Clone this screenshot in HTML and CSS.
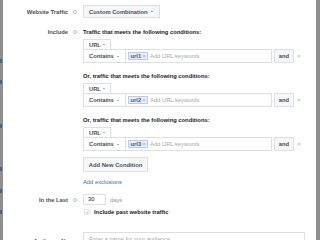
FILE: index.html
```html
<!DOCTYPE html>
<html>
<head>
<meta charset="utf-8">
<link rel="stylesheet" href="styles.css">
</head>
<body>
<div class="screen">
  <div class="edge edge-left">
    <span class="peek p1"></span>
    <span class="peek p2"></span>
    <span class="peek p3"></span>
    <span class="peek p4"></span>
    <span class="peek p5"></span>
    <span class="peek p6"></span>
  </div>
  <div class="dialog">
    <div class="row r-traffic">
      <div class="label">Website Traffic <span class="info"></span></div>
      <div class="field">
        <div class="btn select">Custom Combination <span class="caret"></span></div>
      </div>
    </div>

    <div class="row r-include">
      <div class="label">Include <span class="info"></span></div>
      <div class="field">
        <div class="cond">
          <div class="cond-title">Traffic that meets the following conditions:</div>
          <div class="btn url-sel">URL <span class="caret"></span></div>
          <div class="cond-row">
            <div class="btn contains">Contains <span class="caret"></span></div>
            <div class="kw"><span class="token">url1 <span class="tx">×</span></span><span class="ph">Add URL keywords</span></div>
            <div class="btn and">and</div>
            <div class="remove">×</div>
          </div>
        </div>
        <div class="cond">
          <div class="cond-title">Or, traffic that meets the following conditions:</div>
          <div class="btn url-sel">URL <span class="caret"></span></div>
          <div class="cond-row">
            <div class="btn contains">Contains <span class="caret"></span></div>
            <div class="kw"><span class="token">url2 <span class="tx">×</span></span><span class="ph">Add URL keywords</span></div>
            <div class="btn and">and</div>
            <div class="remove">×</div>
          </div>
        </div>
        <div class="cond">
          <div class="cond-title">Or, traffic that meets the following conditions:</div>
          <div class="btn url-sel">URL <span class="caret"></span></div>
          <div class="cond-row">
            <div class="btn contains">Contains <span class="caret"></span></div>
            <div class="kw"><span class="token">url3 <span class="tx">×</span></span><span class="ph">Add URL keywords</span></div>
            <div class="btn and">and</div>
            <div class="remove">×</div>
          </div>
        </div>
        <div class="btn add-cond">Add New Condition</div>
        <div class="link">Add exclusions</div>
      </div>
    </div>

    <div class="row r-last">
      <div class="label">In the Last <span class="info"></span></div>
      <div class="field inline">
        <div class="days-input">30</div>
        <span class="muted">days</span>
      </div>
    </div>

    <div class="row r-past">
      <div class="label"></div>
      <div class="field inline">
        <span class="check"><svg viewBox="0 0 8 8" width="5" height="5"><path d="M1.5 4.2 L3.2 5.8 L6.5 2" fill="none" stroke="#8d949e" stroke-width="1.1"/></svg></span>
        <span class="strong">Include past website traffic</span>
      </div>
    </div>

    <div class="sep"></div>

    <div class="row r-name">
      <div class="label">Audience Name</div>
      <div class="field">
        <div class="name-input">Enter a name for your audience</div>
      </div>
    </div>
  </div>
  <div class="edge edge-right"></div>
</div>
</body>
</html>
```

FILE: styles.css
```css
* { box-sizing: border-box; }
html, body { margin: 0; padding: 0; background: #fff; }
body {
  font-family: "Liberation Sans", Arial, sans-serif;
  font-size: 5.8px;
  color: #1d2129;
  width: 320px;
  height: 240px;
  overflow: hidden;
}
.screen {
  display: flex;
  width: 320px;
  height: 240px;
}
.edge { flex: none; background: #8f8f8f; height: 240px; }
.edge-left {
  width: 3px;
  position: relative;
  overflow: hidden;
}
.peek {
  position: absolute;
  left: 0;
  width: 2px;
  height: 4px;
  background: #4a5f8c;
}
.p1 { top: 59px; }
.p2 { top: 80px; }
.p3 { top: 124px; }
.p4 { top: 167px; }
.p5 { top: 189px; }
.p6 { top: 210px; }
.edge-right { width: 4px; margin-left: auto; background: #8e8e8e; }
.dialog {
  width: 313px;
  padding-top: 5px;
  display: flex;
  flex-direction: column;
}
.row {
  display: flex;
  align-items: flex-start;
}
.label {
  flex: none;
  width: 80px;
  padding-right: 6px;
  display: flex;
  justify-content: flex-end;
  align-items: center;
  gap: 5px;
  font-weight: bold;
  color: #4b4f56;
  height: 8px;
  line-height: 8px;
  white-space: nowrap;
}
.info {
  width: 4px;
  height: 4px;
  border: 0.8px solid #bec3c9;
  border-radius: 50%;
  flex: none;
}
.field { flex: 1; min-width: 0; }
.inline { display: flex; align-items: center; }

.btn {
  background: #f6f7f9;
  border: 1px solid #dddfe2;
  color: #4b4f56;
  font-weight: bold;
  display: flex;
  align-items: center;
  white-space: nowrap;
}
.caret {
  display: inline-block;
  width: 0;
  height: 0;
  border-left: 1.6px solid transparent;
  border-right: 1.6px solid transparent;
  border-top: 1.8px solid #606770;
  margin-left: 3px;
}

.r-traffic .label { margin-top: 2.5px; }
.select {
  width: 77px;
  height: 13px;
  padding-left: 5px;
  background: #f6f7f9;
}

.r-include { margin-top: 10px; }
.cond { margin-bottom: 9px; }
.cond-title {
  font-weight: bold;
  height: 8px;
  line-height: 8px;
  white-space: nowrap;
}
.url-sel {
  margin-top: 3px;
  width: 28px;
  height: 11px;
  padding-left: 5px;
  background: #fff;
}
.url-sel .caret { margin-left: 2.5px; }
.cond-row {
  display: flex;
  align-items: stretch;
  height: 14px;
  margin-top: -1px;
}
.contains {
  width: 43px;
  padding-left: 5px;
  background: #fff;
}
.kw {
  width: 147px;
  margin-left: -1px;
  border: 1px solid #dddfe2;
  display: flex;
  align-items: center;
  padding-left: 2px;
  white-space: nowrap;
  overflow: hidden;
}
.token {
  background: #e9eef7;
  border: 0.8px solid #bccbe6;
  color: #365899;
  font-weight: bold;
  padding: 0 1.5px;
  height: 8px;
  line-height: 7px;
  display: inline-flex;
  align-items: center;
  gap: 1px;
}
.tx { color: #8fa6cf; font-weight: normal; }
.ph { color: #a4a9b1; margin-left: 2px; }
.and {
  margin-left: 2px;
  width: 20px;
  justify-content: center;
}
.remove {
  margin-left: 3px;
  color: #a4a9b1;
  display: flex;
  align-items: center;
  font-size: 6px;
}
.cond:nth-of-type(3) { margin-bottom: 6px; }
.add-cond {
  width: 65px;
  height: 15px;
  justify-content: center;
}
.link {
  margin-top: 6px;
  height: 8px;
  line-height: 8px;
  color: #4267b2;
}

.r-last { margin-top: 8px; }
.r-last .label { margin-top: 1.5px; }
.days-input {
  width: 23px;
  height: 11px;
  border: 1px solid #dddfe2;
  padding-left: 4px;
  line-height: 9px;
}
.muted { color: #90949c; margin-left: 4px; }

.r-past { margin-top: 3px; }
.check {
  width: 6px;
  height: 6px;
  margin-left: 1px;
  display: flex;
  align-items: center;
  justify-content: center;
  border: 0.6px solid #e4e6eb;
  border-radius: 1px;
  background: #fafbfc;
}
.strong { font-weight: bold; margin-left: 4px; color: #1d2129; }
.r-past .field { height: 8px; }

.sep {
  margin: 11px 8px 0 12px;
  height: 1px;
  background: #e9ebee;
}
.r-name { margin-top: 5px; }
.r-name .label { margin-top: 5px; }
.name-input {
  width: 222px;
  height: 14px;
  border: 1px solid #dddfe2;
  padding-left: 5px;
  color: #a4a9b1;
  line-height: 12px;
}
```
